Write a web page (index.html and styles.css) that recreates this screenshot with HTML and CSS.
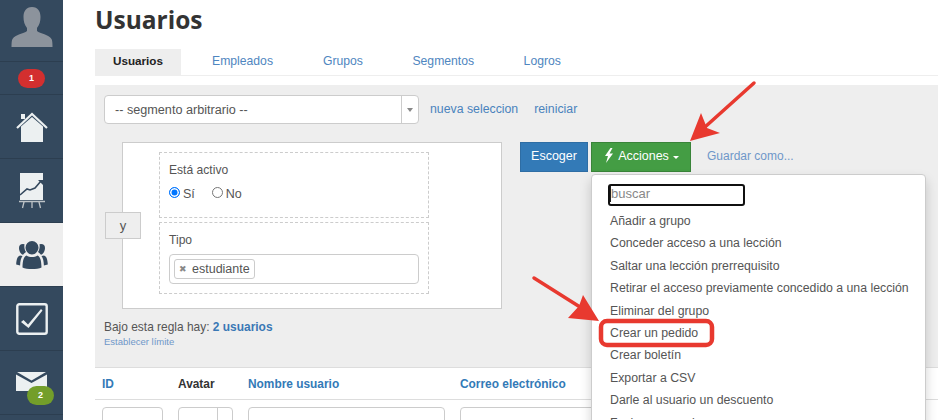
FILE: index.html
```html
<!DOCTYPE html>
<html lang="es">
<head>
<meta charset="utf-8">
<title>Usuarios</title>
<link rel="stylesheet" href="styles.css">
</head>
<body>
<div class="app">
  <nav class="side">
    <div class="side-item side-avatar">
      <svg width="42" height="42" viewBox="0 0 42 42"><path fill="#8c939c" d="M21 0c-6 0-8.500 4.500-8.500 10 0 4 1 8 3.500 11v3c-3 2.500-12 3.500-14.500 8-.8 1.500-1 4-1 8h41c0-4-.2-6.500-1-8-2.500-4.500-11.500-5.500-14.500-8v-3c2.500-3 3.500-7 3.500-11 0-5.500-2.500-10-8.500-10z"/></svg>
    </div>
    <div class="side-item side-badge"><span class="badge badge-red">1</span></div>
    <div class="side-item">
      <svg width="32" height="32" viewBox="0 0 32 32"><path fill="#ecf0f1" d="M5 15.500 16 6l11 9.500V31H5z"/><path fill="none" stroke="#ecf0f1" stroke-width="2.200" d="M1 17 16 3l15 14"/><path fill="#ecf0f1" d="M5 3h4v5H5z"/></svg>
    </div>
    <div class="side-item">
      <svg width="26" height="36" viewBox="0 0 26 36"><path fill="#ecf0f1" d="M1 0h23v27H1z"/><path fill="none" stroke="#34495e" stroke-width="1.600" d="M1 22l7-6 3 1 5-2 6-7"/><path fill="#34495e" d="M19 7h5v5z"/><path fill="none" stroke="#bdc3c7" stroke-width="1.300" d="M0 28.500h26M5 29l-1.500 6M13 29v6M20 29l1.500 6"/></svg>
    </div>
    <div class="side-item side-active">
      <svg width="32" height="28" viewBox="0 0 32 28"><path fill="#34495e" d="M16 0a6.500 6.500 0 0 1 6.500 6.500c0 3.600-2.900 7-6.500 7s-6.500-3.400-6.500-7A6.500 6.500 0 0 1 16 0zM10.500 14.500c1.500 1 3.500 1.500 5.500 1.500s4-.5 5.500-1.500c2.500 1 3.800 4 4 12-2 1-6 1.500-9.500 1.500s-7.500-.5-9.500-1.500c.2-8 1.500-11 4-12z"/><path fill="#34495e" d="M7 3a4 4 0 0 1 1.500.3C8 6 8.500 9 10 11c-1 .7-2.200 1.800-3 2.700C5 13.500 3 10 3 7a4 4 0 0 1 4-4zM25 3a4 4 0 0 0-1.500.3c.5 2.700 0 5.700-1.500 7.700 1 .7 2.200 1.800 3 2.700 2-.2 4-3.700 4-6.700a4 4 0 0 0-4-4zM4 14.500l2.500.5c-1.500 2-2.300 5-2.400 9.500L.2 23.500C.5 18 1.500 15.500 4 14.500zM28 14.500l-2.500.5c1.500 2 2.300 5 2.400 9.500l3.900-1c-.3-5.500-1.300-8-3.800-9z"/></svg>
    </div>
    <div class="side-item">
      <svg width="32" height="32" viewBox="0 0 32 32"><rect x="1.300" y="1.300" width="29.400" height="29.400" rx="2" fill="none" stroke="#ecf0f1" stroke-width="2.400"/><path fill="#ecf0f1" d="M5 19l2.500-2 4.500 4.500L25 6l1.500 1.500L12.500 25z"/></svg>
    </div>
    <div class="side-item side-mail">
      <svg width="31" height="19" viewBox="0 0 31 19"><path fill="#ecf0f1" d="M0 2.500 15.500 11 31 2.500V19H0z"/><path fill="#ecf0f1" d="M1 0h29L15.500 8.500z"/></svg>
      <span class="badge badge-green">2</span>
    </div>
    <div class="side-rest"></div>
  </nav>

  <main class="main">
    <h1 class="title">Usuarios</h1>
    <ul class="tabs">
      <li class="tab tab-active">Usuarios</li>
      <li class="tab tab-emp">Empleados</li>
      <li class="tab tab-gru">Grupos</li>
      <li class="tab tab-seg">Segmentos</li>
      <li class="tab tab-log">Logros</li>
    </ul>

    <section class="panel">
      <div class="seg-row">
        <div class="select">
          <span class="select-text">-- segmento arbitrario --</span>
          <span class="select-arrow"></span>
        </div>
        <a class="link link-new">nueva seleccion</a>
        <a class="link">reiniciar</a>
      </div>

      <div class="rule-row">
        <div class="rule">
          <span class="rule-and">y</span>
          <div class="cond cond-1">
            <div class="cond-label">Está activo</div>
            <div class="radios">
              <span class="radio radio-on"></span><span class="radio-text radio-si">Sí</span>
              <span class="radio"></span><span class="radio-text">No</span>
            </div>
          </div>
          <div class="cond cond-2">
            <div class="cond-label">Tipo</div>
            <div class="tagbox"><span class="tag"><span class="tag-x">✖</span>estudiante</span></div>
          </div>
        </div>
        <div class="actions">
          <button class="btn btn-blue">Escoger</button>
          <button class="btn btn-green">
            <svg class="bolt" width="10" height="15" viewBox="0 0 10 15"><path fill="#fff" d="M6.500 0 1 8h3l-2 7 7-9.500H5.500L8.500 0z"/></svg>
            Acciones<span class="caret"></span>
          </button>
          <a class="link link-save">Guardar como...</a>
          <div class="menu">
            <div class="menu-search"><span class="cursor"></span><span class="placeholder">buscar</span></div>
            <ul class="menu-list">
              <li>Añadir a grupo</li>
              <li>Conceder acceso a una lección</li>
              <li>Saltar una lección prerrequisito</li>
              <li>Retirar el acceso previamente concedido a una lección</li>
              <li>Eliminar del grupo</li>
              <li>Crear un pedido</li>
              <li>Crear boletín</li>
              <li>Exportar a CSV</li>
              <li>Darle al usuario un descuento</li>
              <li>Fusionar usuarios</li>
            </ul>
          </div>
        </div>
      </div>

      <p class="count">Bajo esta regla hay: <strong class="count-num">2 usuarios</strong></p>
      <a class="limit">Establecer límite</a>
    </section>

    <div class="table">
      <div class="thead">
        <span class="th th-id">ID</span>
        <span class="th th-av">Avatar</span>
        <span class="th th-name">Nombre usuario</span>
        <span class="th th-mail">Correo electrónico</span>
      </div>
      <div class="tfilter">
        <span class="fi fi-id"></span>
        <span class="fi fi-av"><span class="fi-split"></span></span>
        <span class="fi fi-name"></span>
        <span class="fi fi-mail"></span>
      </div>
    </div>
  </main>
</div>

<svg class="marks" width="938" height="420" viewBox="0 0 938 420">
  <path fill="none" stroke="#e8392f" stroke-width="3.500" stroke-linecap="round" d="M754 83 705 127"/>
  <path fill="#e8392f" d="M690 141 701 113 707 128 720 133z"/>
  <path fill="none" stroke="#e8392f" stroke-width="3.500" stroke-linecap="round" d="M534 278 580 307"/>
  <path fill="#e8392f" d="M599 321 568 318 579 306 583 295z"/>
  <rect x="601" y="321" width="111" height="24" rx="6" fill="none" stroke="#e8392f" stroke-width="4.500"/>
</svg>
</body>
</html>
```

FILE: styles.css
```css
* { box-sizing: border-box; }
html, body { margin: 0; height: 420px; overflow: hidden; background: #fff; }
body { font-family: "Liberation Sans", Arial, sans-serif; font-size: 13px; color: #555; position: relative; }
ul { list-style: none; margin: 0; padding: 0; }
p { margin: 0; }
a { color: #4a83bd; }

.app { display: flex; height: 420px; overflow: hidden; }

.side { width: 63px; flex: none; background: #34495e; display: flex; flex-direction: column; }
.side-item { height: 64px; flex: none; display: flex; align-items: center; justify-content: center; border-bottom: 1px solid #2c3e50; position: relative; }
.side-avatar { height: 62px; align-items: flex-end; padding-bottom: 12px; }
.side-badge { height: 33px; }
.side-active { background: #eee; }
.side-rest { flex: 1; }
.side-mail svg { margin-top: -2px; }
.badge { display: block; color: #fff; font-weight: bold; font-size: 9px; border-radius: 10px; text-align: center; width: 27px; height: 19px; line-height: 19px; }
.badge-red { background: #d32f2f; }
.badge-green { background: #739e2a; position: absolute; left: 27px; top: 35px; }

.main { flex: 1; min-width: 0; display: flex; flex-direction: column; }
.title { margin: 6px 0 0 32px; font-family: "Open Sans", sans-serif; font-size: 24.500px; line-height: 27px; font-weight: 700; color: #333; flex: none; }

.tabs { display: flex; flex: none; margin: 16px 0 0 32px; height: 27px; border-bottom: 1px solid #eee; font-size: 12.200px; }
.tab { color: #4f86c0; line-height: 24px; }
.tab-active { width: 86px; height: 26px; background: #eee; color: #222; font-weight: bold; font-size: 11.700px; text-align: center; }
.tab-emp { margin-left: 31px; }
.tab-gru { margin-left: 50px; }
.tab-seg { margin-left: 49.500px; }
.tab-log { margin-left: 49.500px; }

.panel { flex: none; margin: 9px 0 0 32px; height: 282px; background: #eee; padding: 10px 0 0 9px; position: relative; }
.seg-row { display: flex; align-items: center; height: 29px; }
.select { width: 315px; height: 29px; background: #fff; border: 1px solid #ccc; border-radius: 4px; display: flex; align-items: center; justify-content: space-between; }
.select-text { padding-left: 10px; font-size: 12.650px; }
.select-arrow { width: 17px; height: 27px; border-left: 1px solid #ccc; position: relative; }
.select-arrow::after { content: ""; position: absolute; left: 5px; top: 12px; border: 3px solid transparent; border-top: 4px solid #888; }
.link { font-size: 12.300px; }
.link-new { margin-left: 11px; margin-right: 16px; }
.seg-row .link { position: relative; top: -1px; }

.rule-row { display: flex; margin-top: 18px; }
.rule { width: 380px; height: 167px; margin-left: 18px; background: #fff; border: 1px solid #ccc; padding: 9px 0 0 36px; position: relative; }
.rule-and { position: absolute; left: -18px; top: 69px; width: 36px; height: 27px; background: #eee; border: 1px solid #ccc; text-align: center; line-height: 25px; font-size: 13px; }
.cond { width: 270px; border: 1px dashed #ccc; padding: 10px 9px 0; }
.cond-1 { height: 66px; }
.cond-2 { height: 72px; margin-top: 4px; }
.cond-label { font-size: 12.100px; line-height: 15px; }
.radios { display: flex; align-items: center; margin-top: 8px; font-size: 12.500px; }
.radio { width: 11px; height: 11px; border-radius: 50%; border: 1px solid #767676; background: #fff; flex: none; position: relative; top: -1px; }
.radio-on { border: 1.500px solid #0075ff; box-shadow: inset 0 0 0 1.500px #fff; background: #0075ff; }
.radio-text { margin-left: 3px; position: relative; top: 1px; }
.radio-si { margin-right: 17px; }
.tagbox { margin-top: 6px; height: 30px; border: 1px solid #ccc; border-radius: 4px; padding: 4px 0 0 4px; background: #fff; }
.tag { display: inline-flex; align-items: center; height: 20px; padding: 0 4px; border: 1px solid #ccc; border-radius: 3px; font-size: 12.500px; }
.tag-x { font-size: 9px; color: #888; margin-right: 5px; }

.actions { display: flex; align-items: flex-start; margin-left: 18px; position: relative; }
.btn { height: 30px; border: 1px solid; color: #fff; font: 12.500px "Liberation Sans", Arial, sans-serif; padding: 0 0 2px; margin: 0; }
.btn-blue { width: 68px; background: #337ab7; border-color: #2e6da4; }
.btn-green { width: 100px; margin-left: 3px; background: #449d44; border-color: #398439; display: flex; align-items: center; justify-content: center; }
.bolt { margin-right: 4px; margin-top: -2px; margin-left: 1px; }
.caret { margin-left: 4px; margin-top: 2px; border: 3.500px solid transparent; border-top: 3.500px solid #fff; border-bottom: 0; }
.link-save { margin-left: 16px; line-height: 28px; font-size: 12px; color: #6f97c9; }

.menu { position: absolute; left: 71px; top: 32px; width: 335px; height: 300px; background: #fff; border: 1px solid #ccc; border-radius: 4px; box-shadow: 0 6px 12px rgba(0,0,0,.18); padding: 9px 0 0 16px; z-index: 2; }
.menu-search { width: 137px; height: 22px; border: 2px solid #101010; border-radius: 3px; padding-bottom: 3px; display: flex; align-items: center; font-size: 13px; color: #888; }
.cursor { width: 1px; height: 16px; background: #222; }
.menu-list { margin-top: 4px; margin-left: 1px; font-size: 12.300px; }
.menu-list li { height: 22.400px; line-height: 22.400px; padding-left: 1px; white-space: nowrap; }

.count { margin: 10px 0 0; font-size: 11.950px; line-height: 16px; }
.count-num { color: #3a78b5; }
.limit { display: block; font-size: 9.500px; line-height: 12px; margin-top: 1px; color: #6f97c9; }

.table { margin-left: 32px; flex: 1; border-top: 1px solid #ddd; padding-left: 7px; position: relative; }
.thead { display: flex; height: 32px; align-items: center; font-size: 11.900px; font-weight: bold; color: #337ab7; margin-left: -7px; padding-left: 7px; border-bottom: 1px solid #ddd; }
.th-id { width: 76px; }
.th-av { width: 70px; color: #333; }
.th-name { width: 212px; }
.tfilter { display: flex; margin-top: 7px; }
.fi { display: block; height: 30px; border: 1px solid #ccc; border-radius: 4px; flex: none; }
.fi-id { width: 61px; }
.fi-av { width: 55px; margin-left: 15px; position: relative; }
.fi-split { position: absolute; left: 38px; top: 0; bottom: 0; border-left: 1px solid #ccc; }
.fi-name { width: 197px; margin-left: 15px; }
.fi-mail { width: 197px; margin-left: 15px; }

.marks { position: absolute; left: 0; top: 0; z-index: 3; pointer-events: none; }
```
